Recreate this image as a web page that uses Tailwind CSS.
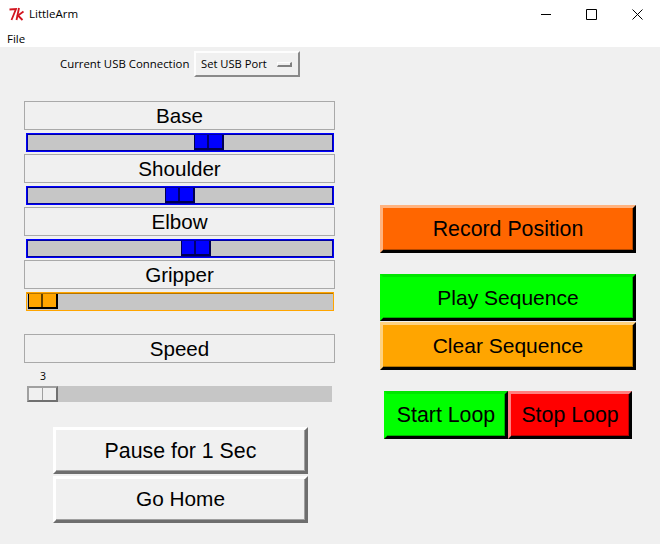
<!DOCTYPE html>
<html lang="en">
<head>
    <meta charset="UTF-8">
    <title>LittleArm</title>
    <script src="https://cdn.jsdelivr.net/npm/@tailwindcss/browser@4"></script>
</head>
<body class="bg-[#f0f0f0] font-['Liberation_Sans',sans-serif] text-black overflow-hidden">
    <div class="w-[660px] h-[544px] flex flex-col">

        <!-- Title bar -->
        <div class="h-[28px] bg-white flex items-center pl-[8px] font-['Open_Sans',sans-serif] text-[11.5px]">
            <svg class="w-[17px] h-[14px]" viewBox="0 0 17 14" fill="none" stroke="#d2141e" stroke-width="1.8">
                <path d="M1.5 2.5 L8 2 L3.5 13"/>
                <path d="M11 1 L8.5 13"/>
                <path d="M15.5 4.5 L10 8.5 L14.5 13"/>
            </svg>
            <span class="ml-[4px]">LittleArm</span>
            <div class="ml-auto flex items-center">
                <svg class="w-[11px] h-[11px] mr-[34px]" viewBox="0 0 11 11" stroke="black" fill="none"><path d="M0 5.5H10"/></svg>
                <svg class="w-[11px] h-[11px] mr-[35px]" viewBox="0 0 11 11" stroke="black" fill="none"><path d="M0.5 0.5H10.5V10.5H0.5Z"/></svg>
                <svg class="w-[11px] h-[11px] mr-[17px]" viewBox="0 0 11 11" stroke="black" fill="none"><path d="M0.5 0.5L10.5 10.5M10.5 0.5L0.5 10.5"/></svg>
            </div>
        </div>

        <!-- Menu bar -->
        <div class="h-[19px] bg-white pl-[7px] font-['Open_Sans',sans-serif] text-[11.5px] leading-[21px]">File</div>

        <!-- USB row -->
        <div class="flex items-center pl-[60px] pt-[4px] font-['Open_Sans',sans-serif] text-[11.4px]">
            <span class="w-[134px] whitespace-nowrap">Current USB Connection</span>
            <div class="w-[106px] h-[26px] flex items-center pl-[5px] border-2 border-t-[#fdfdfd] border-l-[#fdfdfd] border-r-[#8a8a8a] border-b-[#8a8a8a] whitespace-nowrap text-[11.2px]">
                Set USB Port
                <span class="ml-auto mr-[6px] w-[15px] h-[5px] bg-[#f0f0f0] border-t border-l border-r-2 border-b-2 border-t-[#fdfdfd] border-l-[#fdfdfd] border-r-[#808080] border-b-[#808080]"></span>
            </div>
        </div>

        <div class="flex pl-[24px]">
            <!-- Left column: sliders -->
            <div class="w-[311px] pt-[24px] flex flex-col">
                <div class="h-[29px] pt-[2px] border border-[#a9a9a9] flex items-center justify-center text-[20.6px]">Base</div>
                <div class="mt-[3px] ml-[2px] w-[308px] h-[19px] p-[1px] bg-[#c6c6c6] border border-[#0000ff] shadow-[inset_1px_1px_0_#0000a0,inset_-1px_-1px_0_#0000a0] flex">
                    <div class="ml-[166px] w-[30px] h-[15px] flex bg-[#0000ff] border-b-2 border-r-2 border-l border-[#000050]"><div class="w-[14px] border-r-2 border-[#000070]"></div></div>
                </div>
                <div class="mt-[2px] h-[29px] pt-[2px] border border-[#a9a9a9] flex items-center justify-center text-[20.6px]">Shoulder</div>
                <div class="mt-[3px] ml-[2px] w-[308px] h-[19px] p-[1px] bg-[#c6c6c6] border border-[#0000ff] shadow-[inset_1px_1px_0_#0000a0,inset_-1px_-1px_0_#0000a0] flex">
                    <div class="ml-[137px] w-[30px] h-[15px] flex bg-[#0000ff] border-b-2 border-r-2 border-l border-[#000050]"><div class="w-[14px] border-r-2 border-[#000070]"></div></div>
                </div>
                <div class="mt-[2px] h-[29px] pt-[2px] border border-[#a9a9a9] flex items-center justify-center text-[20.6px]">Elbow</div>
                <div class="mt-[3px] ml-[2px] w-[308px] h-[19px] p-[1px] bg-[#c6c6c6] border border-[#0000ff] shadow-[inset_1px_1px_0_#0000a0,inset_-1px_-1px_0_#0000a0] flex">
                    <div class="ml-[153px] w-[30px] h-[15px] flex bg-[#0000ff] border-b-2 border-r-2 border-l border-[#000050]"><div class="w-[14px] border-r-2 border-[#000070]"></div></div>
                </div>
                <div class="mt-[2px] h-[29px] pt-[2px] border border-[#a9a9a9] flex items-center justify-center text-[20.6px]">Gripper</div>
                <div class="mt-[3px] ml-[2px] w-[308px] h-[19px] p-[1px] bg-[#c6c6c6] border border-[#ffa500] shadow-[inset_0_1px_0_#b47400] flex">
                    <div class="w-[30px] h-[15px] flex bg-[#ffa500] border-b-2 border-r-2 border-l border-black"><div class="w-[14px] border-r-2 border-[#604000]"></div></div>
                </div>

                <div class="mt-[23px] h-[29px] pt-[2px] border border-[#a9a9a9] flex items-center justify-center text-[20.6px]">Speed</div>
                <div class="h-[23px] pl-[16px] pt-[6px] font-['Open_Sans',sans-serif] text-[10.5px] leading-[14px]">3</div>
                <div class="ml-[3px] w-[305px] h-[16px] bg-[#c6c6c6] flex">
                    <div class="w-[31px] h-[16px] flex bg-[#f0f0f0] border-2 border-t-[#a0a0a0] border-l-[#a0a0a0] border-r-[#707070] border-b-[#707070]"><div class="w-[14px] border-r border-[#a0a0a0]"></div></div>
                </div>

                <div class="mt-[25px] ml-[29px] w-[255px] h-[47px] pt-[2px] flex items-center justify-center text-[21.33px] border-[3px] border-t-white border-l-white border-r-[#6e6e6e] border-b-[#6e6e6e] shadow-[inset_-1px_-1px_0_#a0a0a0]">Pause for 1 Sec</div>
                <div class="mt-[2px] ml-[29px] w-[255px] h-[47px] pb-[2px] flex items-center justify-center text-[20.8px] border-[3px] border-t-white border-l-white border-r-[#6e6e6e] border-b-[#6e6e6e] shadow-[inset_-1px_-1px_0_#a0a0a0]">Go Home</div>
            </div>

            <!-- Right column: action buttons -->
            <div class="ml-[45px] w-[256px] pt-[128px] flex flex-col">
                <div class="h-[48px] pt-[2px] flex items-center justify-center text-[21.33px] bg-[#ff6600] border-[3px] border-t-[#ffb380] border-l-[#ffb380] border-r-black border-b-black shadow-[inset_-1px_-1px_0_#b34700]">Record Position</div>
                <div class="mt-[21px] h-[47px] flex items-center justify-center text-[21px] bg-[#00ff00] border-[3px] border-t-[#00e600] border-l-[#00ff00] border-r-black border-b-black shadow-[inset_-1px_-1px_0_#00b300]">Play Sequence</div>
                <div class="mt-[1px] h-[48px] flex items-center justify-center text-[21px] bg-[#ffa500] border-[3px] border-t-[#ffd280] border-l-[#ffd280] border-r-black border-b-black shadow-[inset_-1px_-1px_0_#b37400]">Clear Sequence</div>
                <div class="mt-[21px] ml-[4px] flex">
                    <div class="w-[124px] h-[48px] pt-[2px] flex items-center justify-center text-[21.33px] bg-[#00ff00] border-[3px] border-t-[#00e600] border-l-[#00ff00] border-r-black border-b-black shadow-[inset_-1px_-1px_0_#00b300]">Start Loop</div>
                    <div class="w-[124px] h-[48px] pt-[2px] flex items-center justify-center text-[21.33px] bg-[#ff0000] border-[3px] border-t-[#ff8080] border-l-[#ff8080] border-r-black border-b-black shadow-[inset_-1px_-1px_0_#b30000]">Stop Loop</div>
                </div>
            </div>
        </div>
    </div>
</body>
</html>
